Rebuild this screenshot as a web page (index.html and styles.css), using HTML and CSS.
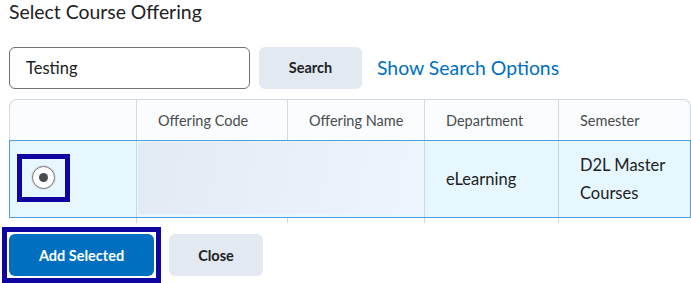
FILE: index.html
```html
<!DOCTYPE html>
<html>
<head>
<meta charset="utf-8">
<link rel="stylesheet" href="styles.css">
</head>
<body>
<div class="page">
  <h1 class="title">Select Course Offering</h1>
  <div class="search-row">
    <div class="input">Testing</div>
    <button class="btn btn-secondary btn-search">Search</button>
    <a class="link">Show Search Options</a>
  </div>
  <div class="table">
    <div class="row head">
      <div class="cell"></div>
      <div class="cell">Offering Code</div>
      <div class="cell">Offering Name</div>
      <div class="cell">Department</div>
      <div class="cell">Semester</div>
    </div>
    <div class="row data">
      <div class="cell radio-cell">
        <div class="focus-box"><span class="radio"><span class="dot"></span></span></div>
      </div>
      <div class="cell blur-cell span2"><div class="blur"></div></div>
      <div class="cell">eLearning</div>
      <div class="cell">D2L Master Courses</div>
    </div>
    <div class="row stub">
      <div class="cell"></div>
      <div class="cell"></div>
      <div class="cell"></div>
      <div class="cell"></div>
      <div class="cell"></div>
    </div>
  </div>
  <div class="actions">
    <div class="focus-wrap"><button class="btn btn-primary">Add Selected</button></div>
    <button class="btn btn-secondary btn-close">Close</button>
  </div>
</div>
</body>
</html>
```
FILE: styles.css
```css
html, body {
  margin: 0;
  padding: 0;
  background: #ffffff;
}
body {
  font-family: Lato, "Open Sans", sans-serif;
  color: #202122;
  width: 691px;
  height: 283px;
  overflow: hidden;
}
.page {
  padding-left: 9px;
}
.title {
  margin: 0;
  padding-top: 0;
  font-size: 19.4px;
  font-weight: 400;
  line-height: 24px;
  color: #202122;
}
.search-row {
  display: flex;
  align-items: center;
  margin-top: 23px;
  height: 42px;
}
.input {
  box-sizing: border-box;
  width: 241px;
  height: 42px;
  border: 1px solid #6e7376;
  border-radius: 6px;
  padding-left: 16px;
  padding-bottom: 1px;
  display: flex;
  align-items: center;
  font-size: 16.5px;
  color: #202122;
}
.btn {
  font-family: Lato, "Open Sans", sans-serif;
  font-weight: 700;
  font-size: 14.5px;
  border: none;
  border-radius: 6px;
  height: 42px;
  padding: 0;
  cursor: pointer;
}
.btn-secondary {
  background: #e3e9f1;
  color: #202122;
}
.btn-search {
  width: 103px;
  margin-left: 9px;
  padding-bottom: 2px;
}
.link {
  margin-left: 15px;
  font-size: 19.4px;
  color: #006fbf;
  text-decoration: none;
  margin-top: -2px;
}
.table {
  margin-top: 10px;
  width: 682px;
}
.row {
  box-sizing: border-box;
  display: grid;
  grid-template-columns: 127px 151px 137px 134px 131px;
}
.cell {
  box-sizing: border-box;
  border-right: 1px solid #d3d9e3;
  display: flex;
  align-items: center;
  padding-left: 21px;
  padding-right: 20px;
}
.cell:last-child {
  border-right: none;
}
.head {
  border: 1px solid #d3d9e3;
  border-bottom: none;
  border-radius: 8px 8px 0 0;
  background: #fbfcfd;
  height: 41px;
  font-size: 14.5px;
  color: #494c4e;
}
.data {
  border: 1px solid #4aa0dc;
  background: #e7f7ff;
  height: 78px;
  font-size: 16.5px;
  line-height: 28px;
  color: #202122;
}
.data .cell {
  border-right-color: #c3dcea;
}
.span2 {
  grid-column: span 2;
  padding: 0;
  align-items: stretch;
}
.blur {
  flex: 1;
  margin: 1px 0 3px 1px;
  background: linear-gradient(100deg, #e2eaf4 0%, #e8eff8 45%, #eef5fc 100%);
}
.radio-cell {
  padding-left: 7px;
  padding-right: 0;
}
.focus-box {
  width: 43px;
  height: 38px;
  border: 5px solid #10069f;
  display: flex;
  align-items: center;
  justify-content: center;
  margin-top: -3px;
}
.radio {
  box-sizing: border-box;
  width: 23px;
  height: 23px;
  border-radius: 50%;
  border: 1px solid #6e7376;
  background: #ffffff;
  box-shadow: 0 0 0 1px #dfe3e8;
  display: flex;
  align-items: center;
  justify-content: center;
}
.dot {
  width: 9px;
  height: 9px;
  border-radius: 50%;
  background: #494c4e;
}
.stub {
  height: 5px;
  padding: 0 1px;
}
.stub .cell {
  border-right-color: #d3d9e3;
}
.actions {
  display: flex;
  align-items: center;
  margin-top: 4px;
  margin-left: -7px;
}
.focus-wrap {
  border: 5px solid #10069f;
  padding: 2px;
  background: #ffffff;
  display: flex;
}
.btn-primary {
  background: #006fbf;
  color: #ffffff;
  width: 145px;
}
.btn-close {
  width: 94px;
  margin-left: 8px;
}
```
